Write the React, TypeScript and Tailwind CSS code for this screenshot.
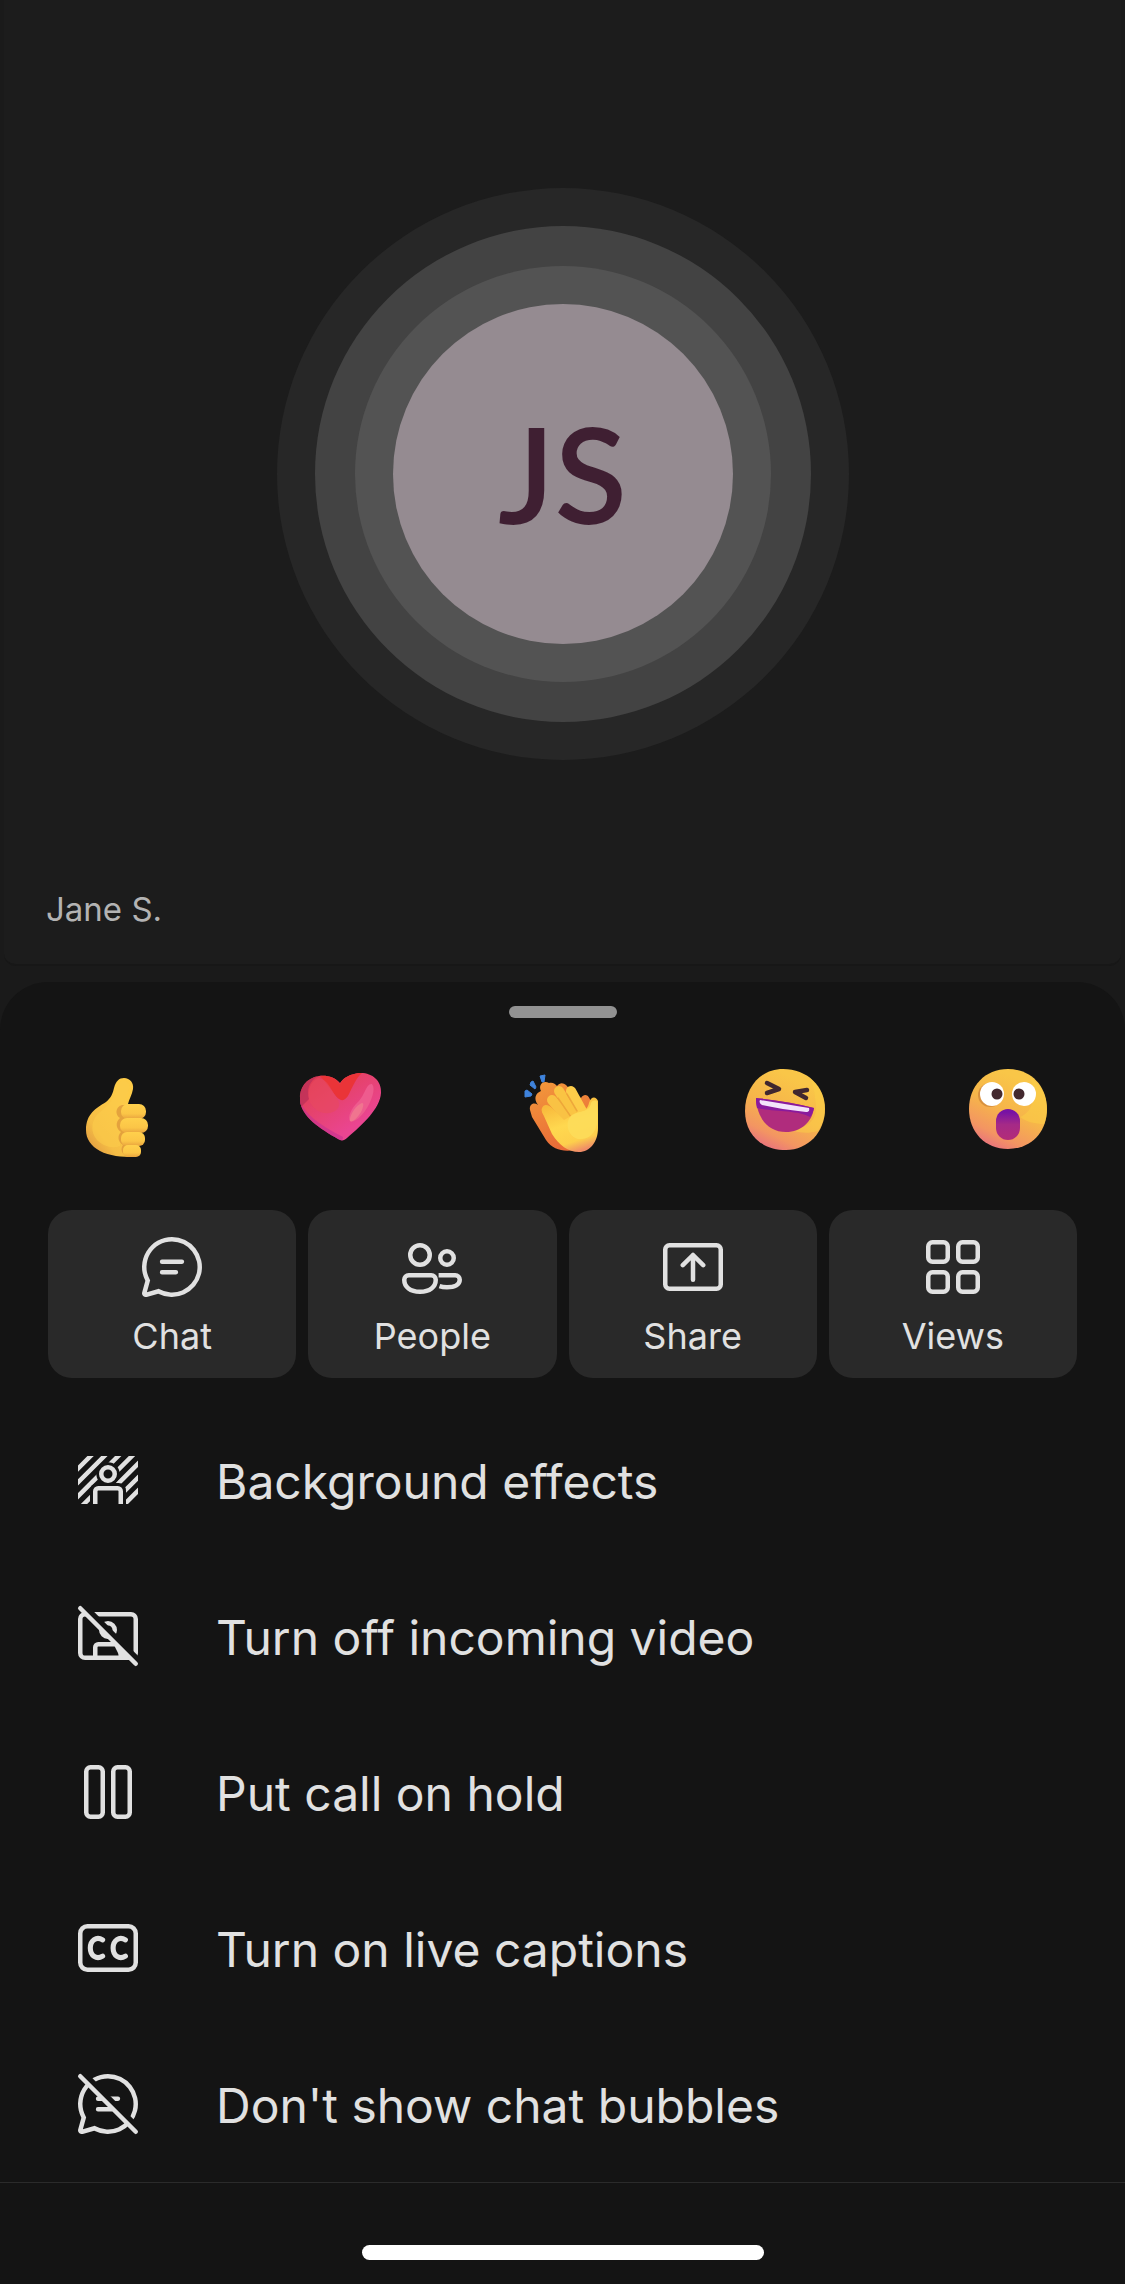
import type { ReactNode } from "react";

const svgBase = {
  viewBox: "0 0 24 24",
  fill: "none",
  stroke: "currentColor",
  strokeWidth: 1.5,
  "aria-hidden": true,
  className: "size-[72px] shrink-0",
} as const;

const CHAT_PATH =
  "M12 2a10 10 0 1 1-4.59 18.89L3.6 21.96a1.25 1.25 0 0 1-1.54-1.54l1.06-3.83A10 10 0 0 1 12 2Zm0 1.5a8.5 8.5 0 0 0-7.43 12.64l.15.27-1.1 3.98 3.98-1.11.27.15A8.5 8.5 0 1 0 12 3.5ZM8.75 13h4.5a.75.75 0 0 1 .1 1.5h-4.6a.75.75 0 0 1-.1-1.5h4.6-4.5Zm0-3.5h6.5a.75.75 0 0 1 .1 1.5h-6.6a.75.75 0 0 1-.1-1.5h6.6-6.5Z";

function ChatIcon() {
  return (
    <svg {...svgBase} stroke="none">
      <path d={CHAT_PATH} fill="currentColor" />
    </svg>
  );
}

function PeopleIcon() {
  return (
    <svg {...svgBase}>
      <circle cx="8" cy="8" r="3.25" />
      <circle cx="17" cy="9" r="2.25" />
      <path d="M4.25 14.75h7.5a1.5 1.5 0 0 1 1.5 1.5c0 2.4-2 4-5.25 4s-5.25-1.6-5.25-4a1.5 1.5 0 0 1 1.5-1.5Z" />
      <path d="M14.2 14.75h5.55a1.5 1.5 0 0 1 1.5 1.5c0 1.6-1.6 2.5-4.25 2.5-.9 0-1.8-.1-2.5-.35" />
    </svg>
  );
}

function ShareIcon() {
  return (
    <svg {...svgBase} strokeLinecap="round" strokeLinejoin="round">
      <rect x="2.75" y="4.75" width="18.5" height="14.5" rx="1.4" />
      <path d="M12 16.25V8M8.6 11.4 12 8l3.4 3.4" />
    </svg>
  );
}

function ViewsIcon() {
  return (
    <svg {...svgBase}>
      <rect x="3.75" y="3.75" width="6.5" height="6.5" rx="1.4" />
      <rect x="13.75" y="3.75" width="6.5" height="6.5" rx="1.4" />
      <rect x="3.75" y="13.75" width="6.5" height="6.5" rx="1.4" />
      <rect x="13.75" y="13.75" width="6.5" height="6.5" rx="1.4" />
    </svg>
  );
}

function BackgroundIcon() {
  return (
    <svg {...svgBase}>
      <clipPath id="bg-frame">
        <rect x="2" y="4" width="20" height="16" />
      </clipPath>
      <mask id="bg-person" maskUnits="userSpaceOnUse" x="0" y="0" width="24" height="24">
        <rect width="24" height="24" fill="#fff" stroke="none" />
        <circle cx="12" cy="10" r="3.9" fill="#000" stroke="none" />
        <path d="M6 21v-5.5a2.5 2.5 0 0 1 2.5-2.5h7a2.5 2.5 0 0 1 2.5 2.5V21Z" fill="#000" stroke="none" />
      </mask>
      <g clipPath="url(#bg-frame)">
        <path
          mask="url(#bg-person)"
          d="M0 10.2 10.2 0M0 14.8 14.8 0M0 19.4 19.4 0M0 24 24 0M4.6 24 24 4.6M9.2 24 24 9.2M13.6 24 24 13.6"
        />
        <path d="M7.75 21v-5.25a1 1 0 0 1 1-1h6.5a1 1 0 0 1 1 1V21" />
      </g>
      <circle cx="12" cy="10" r="2.25" />
    </svg>
  );
}

function SlashMask({ id }: { id: string }) {
  return (
    <mask id={id} maskUnits="userSpaceOnUse" x="0" y="0" width="24" height="24">
      <rect width="24" height="24" fill="#fff" stroke="none" />
      <path d="M2 0 24 22" stroke="#000" strokeWidth="2" />
    </mask>
  );
}

function VideoOffIcon() {
  return (
    <svg {...svgBase} strokeLinecap="round">
      <SlashMask id="video-cut" />
      <g mask="url(#video-cut)">
        <rect x="2.75" y="4.75" width="18.5" height="14.5" rx="1.6" />
        <path d="M7.75 19v-3.25a1 1 0 0 1 1-1h6.5a1 1 0 0 1 1 1V19" />
        <circle cx="12" cy="10" r="2.25" />
        <path d="m14 15 3 0 2 4h-3Z" fill="currentColor" stroke="none" />
      </g>
      <path d="m2.75 2.75 18.5 18.5" />
    </svg>
  );
}

function HoldIcon() {
  return (
    <svg {...svgBase}>
      <rect x="4.75" y="3.75" width="5.5" height="16.5" rx="1.4" />
      <rect x="13.75" y="3.75" width="5.5" height="16.5" rx="1.4" />
    </svg>
  );
}

function CaptionsIcon() {
  return (
    <svg {...svgBase} strokeLinecap="round">
      <rect x="2.75" y="4.75" width="18.5" height="14.5" rx="2.4" />
      <path
        strokeWidth="1.7"
        d="M10.2 9.3C8.2 8 6.1 9.4 6.1 12s2.1 4 4.1 2.7M17.8 9.3c-2-1.3-4.1.1-4.1 2.7s2.1 4 4.1 2.7"
      />
    </svg>
  );
}

function ChatOffIcon() {
  return (
    <svg {...svgBase} strokeLinecap="round">
      <SlashMask id="chat-cut" />
      <path mask="url(#chat-cut)" d={CHAT_PATH} fill="currentColor" stroke="none" />
      <path d="m2.75 2.75 18.5 18.5" />
    </svg>
  );
}

const emojiBase = { viewBox: "0 0 96 96", "aria-hidden": true, className: "size-24" } as const;

function ThumbsUp() {
  return (
    <svg {...emojiBase}>
      <defs>
        <linearGradient id="th-palm" x1="0.7" y1="0.2" x2="0.1" y2="1">
          <stop offset="0" stopColor="#fdcb47" />
          <stop offset="0.65" stopColor="#f5bd45" />
          <stop offset="1" stopColor="#dd9440" />
        </linearGradient>
        <linearGradient id="th-finger" x1="0" y1="0" x2="0" y2="1">
          <stop offset="0" stopColor="#ffd04c" />
          <stop offset="0.65" stopColor="#fbc547" />
          <stop offset="1" stopColor="#e8a33e" />
        </linearGradient>
      </defs>
      <path
        d="M45 26C47 19 50 16 55 16c6 0 10 5 9 11-1 6-4 10-5 15h6v53C53 95 40 94 31 89 22 84 17 77 17 68c0-16 10-22 20-28 5-4 7-9 8-14Z"
        fill="url(#th-palm)"
      />
      <path
        d="M47 28c2-7 4-9 8-9 4 0 6 4 5 8-2 7-5 11-6 17l-3 40c-8 3-17 0-23-6-7-8-6-20 2-27 8-7 15-12 17-23Z"
        fill="#fccb4b"
        opacity="0.6"
      />
      <path d="M53 43c-7 2-7 10-2 13-5 4-4 11 1 14-4 4-3 10 2 13-3 4-1 9 3 11h7V43Z" fill="#dc963a" opacity="0.75" />
      <rect x="52" y="42" width="25" height="15" rx="7" fill="url(#th-finger)" />
      <rect x="51" y="56" width="28" height="15" rx="7" fill="url(#th-finger)" />
      <rect x="52" y="70" width="24" height="14" rx="6" fill="url(#th-finger)" />
      <rect x="54" y="83" width="18" height="12" rx="5" fill="url(#th-finger)" />
    </svg>
  );
}

function Heart() {
  return (
    <svg {...emojiBase}>
      <defs>
        <linearGradient id="he-body" x1="0.2" y1="0.1" x2="0.6" y2="0.7">
          <stop offset="0" stopColor="#e03a4e" />
          <stop offset="0.45" stopColor="#e5426a" />
          <stop offset="1" stopColor="#ea4591" />
        </linearGradient>
        <clipPath id="he-clip">
          <path d="M48 21C43 15 35 13 27 14 14 16 7 26 8 38c1 17 21 29 38 39 3 2 6 2 9-1C70 63 88 47 89 31 90 18 79 10 67 11c-8 1-15 4-19 10Z" />
        </clipPath>
      </defs>
      <g clipPath="url(#he-clip)">
        <rect width="96" height="96" fill="url(#he-body)" />
        <path d="M26 12C40 11 44 17 48 22 52 13 60 10 70 11c-6 5-9 13-13 21-4 8-9 8-14 1-6-8-10-14-17-21Z" fill="#ea3438" />
        <path d="M8 38c5 16 24 27 43 37l-1 5L6 56Z" fill="#c73391" opacity="0.65" />
        <path d="M28 13C18 18 14 27 17 37L8 46 4 18Z" fill="#bd3159" opacity="0.8" />
        <path d="M17 38c-1-10 1-18 9-22 11 2 13 12 18 19 5 6 4 12-3 15-10 4-20-2-24-12Z" fill="#e8495f" opacity="0.6" />
        <path d="M80 22c4 4 0 17-7 27-4 6-11 12-15 10-3-4 2-13 7-18 8-7 9-20 15-19Z" fill="#ee5b8e" />
        <path d="M68 42c4-3 4 1 2 6-3 7-10 13-12 11-1-3 4-14 10-17Z" fill="#f0758f" />
      </g>
    </svg>
  );
}

function Clap() {
  return (
    <svg {...emojiBase}>
      <defs>
        <linearGradient id="cl-front" x1="0.3" y1="0.1" x2="0.6" y2="1">
          <stop offset="0" stopColor="#f8b93c" />
          <stop offset="0.45" stopColor="#ffd84f" />
          <stop offset="0.8" stopColor="#fdcf4c" />
          <stop offset="1" stopColor="#f08d67" />
        </linearGradient>
        <linearGradient id="cl-back" x1="0" y1="0" x2="0.4" y2="1">
          <stop offset="0" stopColor="#f39a3b" />
          <stop offset="1" stopColor="#e96b38" />
        </linearGradient>
      </defs>
      <path d="m10 29 2-1 5 4-1 2-6 1ZM16 20l2-1 3 6-1 2-5-4ZM25 14l5-1-1 7h-2Z" fill="#3f83dc" stroke="#3f83dc" strokeWidth="1" strokeLinejoin="round" />
      <path
        d="M15 48c-1-6 4-8 8-5-5-7-2-12 3-14-3-6 2-11 8-8 4-1 6 1 8 3 4-5 9-3 13 4l11 8c4-6 9-2 10 5L60 88c-12 2-22 0-29-10L17 55Z"
        fill="url(#cl-back)"
      />
      <g stroke="url(#cl-front)" strokeWidth="10" strokeLinecap="round">
        <path d="M32 49 50 68" />
        <path d="M37 38 57 62" stroke="#f9c244" />
        <path d="M44 29 61 57" stroke="#fac443" />
        <path d="M56 29 68 51" stroke="#fdcc49" />
      </g>
      <path d="m33 43 14 17M43 36l13 19M52 32l10 17" stroke="#e99b36" strokeWidth="1.5" strokeLinecap="round" opacity="0.7" />
      <path
        d="M27 46c2-5 7-3 10 0l12 12 16-9c5 0 8-3 9-8 2-7 7-7 9-2v27c0 14-8 24-19 24-11 0-20-7-27-18L28 52c-1-2-2-4-1-6Z"
        fill="url(#cl-front)"
      />
      <path d="M57 53c8-5 17-2 19-12 2-3 5-3 6-1v22c-2 10-9 16-18 15-10-1-16-16-7-24Z" fill="#fddd5b" opacity="0.8" />
    </svg>
  );
}

function FaceFill({ id }: { id: string }) {
  return (
    <defs>
      <linearGradient id={id} x1="0.7" y1="0.15" x2="0.3" y2="1">
        <stop offset="0" stopColor="#f9c648" />
        <stop offset="0.45" stopColor="#f6b54a" />
        <stop offset="0.8" stopColor="#f39562" />
        <stop offset="1" stopColor="#e8717f" />
      </linearGradient>
      <linearGradient id={`${id}-mouth`} x1="0" y1="0" x2="0" y2="1">
        <stop offset="0.1" stopColor="#7712a4" />
        <stop offset="0.5" stopColor="#a52a87" />
        <stop offset="1" stopColor="#b32c78" />
      </linearGradient>
    </defs>
  );
}

function Laugh() {
  return (
    <svg {...emojiBase}>
      <FaceFill id="la" />
      <path d="M46 7c24 0 42 17 42 40S71 88 49 88C24 88 8 72 8 49S23 7 46 7Z" fill="url(#la)" />
      <path d="M73 16c9 8 15 18 15 31 0 9-3 16-7 22-10 3-19 2-28-1 17-2 27-9 26-24-1-11-2-19-6-28Z" fill="#fbcf48" opacity="0.5" />
      <path d="m30 21 12 6-12 4M70 28l-12 2 11 6" fill="none" stroke="#40272f" strokeWidth="4.5" strokeLinecap="round" strokeLinejoin="round" />
      <path d="M19 36c20 2 39 5 58 10-2 14-13 24-28 24-18 0-29-14-30-34Z" fill="#b02c7d" />
      <path d="M19 36c20 2 39 5 58 10-1 4-2 7-4 9-11-7-37-5-53-9-1-3-1-7-1-10Z" fill="#8a1a9d" />
      <path d="m23 38 49 8c1 3-1 4-3 4-16-2-31-4-44-7-2-1-3-3-2-5Z" fill="#f3e3fb" />
    </svg>
  );
}

function Wow() {
  return (
    <svg {...emojiBase}>
      <FaceFill id="wo" />
      <path d="M48 7c23 0 39 17 39 40S71 87 48 87 9 70 9 47 25 7 48 7Z" fill="url(#wo)" />
      <path d="M70 15c11 8 17 19 17 32 0 6-1 11-3 15-9 0-17-2-24-7 13-5 17-22 10-40Z" fill="#fccf45" opacity="0.5" />
      <ellipse cx="30" cy="33" rx="12" ry="12" fill="#d9913f" />
      <circle cx="32" cy="32" r="12" fill="#fff" />
      <circle cx="64" cy="32" r="12" fill="#fff" />
      <circle cx="37" cy="32" r="5.5" fill="#43292f" />
      <circle cx="59" cy="32" r="5.5" fill="#43292f" />
      <rect x="36" y="47" width="24" height="31" rx="12" fill="url(#wo-mouth)" />
    </svg>
  );
}

const reactions: { label: string; art: ReactNode }[] = [
  { label: "Like", art: <ThumbsUp /> },
  { label: "Love", art: <Heart /> },
  { label: "Applause", art: <Clap /> },
  { label: "Laugh", art: <Laugh /> },
  { label: "Surprised", art: <Wow /> },
];

const tiles: { label: string; icon: ReactNode }[] = [
  { label: "Chat", icon: <ChatIcon /> },
  { label: "People", icon: <PeopleIcon /> },
  { label: "Share", icon: <ShareIcon /> },
  { label: "Views", icon: <ViewsIcon /> },
];

const options: { label: string; icon: ReactNode }[] = [
  { label: "Background effects", icon: <BackgroundIcon /> },
  { label: "Turn off incoming video", icon: <VideoOffIcon /> },
  { label: "Put call on hold", icon: <HoldIcon /> },
  { label: "Turn on live captions", icon: <CaptionsIcon /> },
  { label: "Don't show chat bubbles", icon: <ChatOffIcon /> },
];

export default function App() {
  return (
    <main className="flex min-h-screen flex-col bg-[#1a1a1a] font-['Inter','Liberation_Sans',sans-serif] text-[#e1e1e1]">
      <section className="mx-1 mb-4 flex flex-col rounded-b-xl border-b-2 border-[#171717] bg-[#1c1c1c] pt-[188px]">
        <div className="mx-auto rounded-full bg-[#272727] p-[38px]">
          <div className="rounded-full bg-[#434343] p-10">
            <div className="rounded-full bg-[#535353] p-[38px]">
              <div className="flex size-[340px] items-center justify-center rounded-full bg-[#958b91] pb-1 font-['Lato','Noto_Sans',sans-serif] text-[133px] leading-none font-semibold text-[#3f1f32]">
                JS
              </div>
            </div>
          </div>
        </div>
        <p className="mt-[129px] mb-[35px] px-[42px] text-[33px] leading-10 text-[#b3b3b3]">Jane S.</p>
      </section>

      <section className="flex grow flex-col rounded-t-[48px] bg-[#141414] pt-6">
        <div className="mx-auto h-3 w-[108px] rounded-full bg-[#929292]" />

        <div className="mt-11 flex justify-between px-[69px]">
          {reactions.map((r) => (
            <button key={r.label} type="button" aria-label={r.label}>
              {r.art}
            </button>
          ))}
        </div>

        <div className="mt-[52px] grid grid-cols-4 gap-3 px-12">
          {tiles.map((t) => (
            <button
              key={t.label}
              type="button"
              className="flex h-[168px] flex-col items-center rounded-3xl bg-[#292929] pt-[21px] text-[36px] leading-[66px]"
            >
              {t.icon}
              {t.label}
            </button>
          ))}
        </div>

        <ul className="mt-6 border-b border-[#2b2b2b]">
          {options.map((o) => (
            <li key={o.label}>
              <button type="button" className="flex h-[156px] w-full items-center gap-[72px] px-[72px] text-left text-[48px]">
                {o.icon}
                <span className="pt-[3px]">{o.label}</span>
              </button>
            </li>
          ))}
        </ul>

        <div className="mx-auto mt-[62px] mb-6 h-[15px] w-[402px] rounded-full bg-white" />
      </section>
    </main>
  );
}
